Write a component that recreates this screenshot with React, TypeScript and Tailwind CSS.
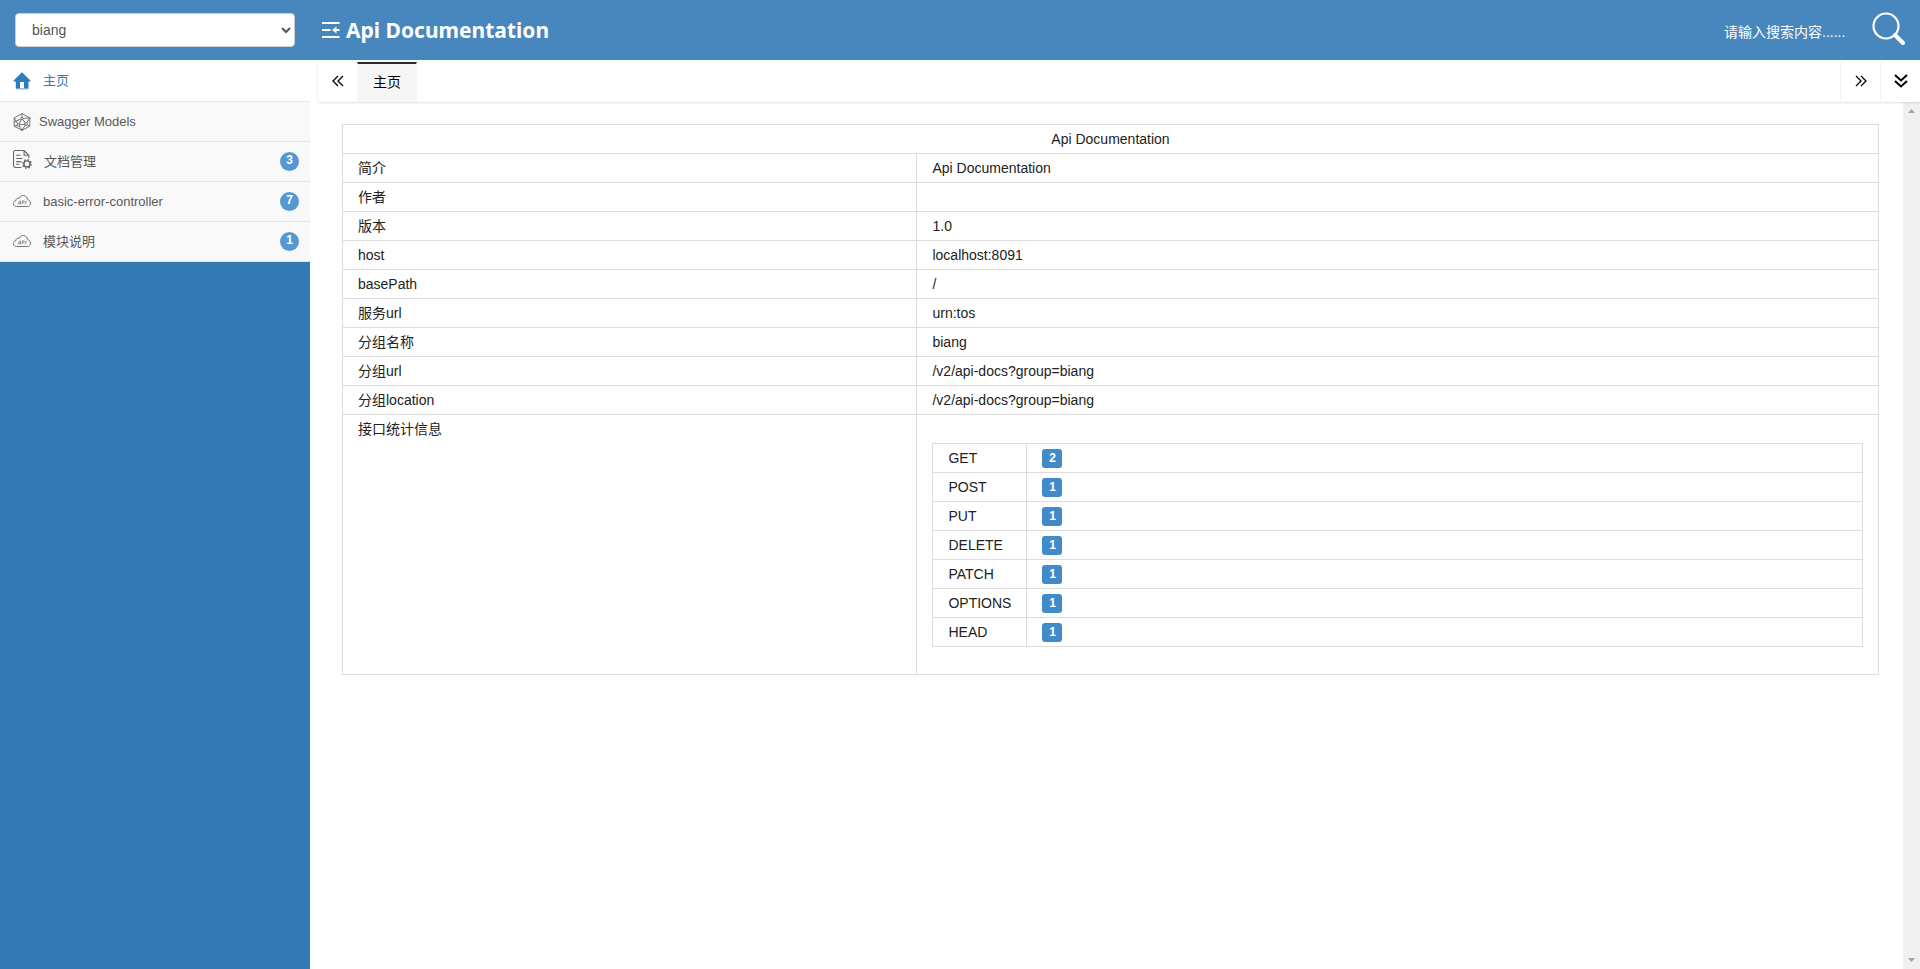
import React from "react";

const info: [string, string][] = [
  ["简介", "Api Documentation"],
  ["作者", ""],
  ["版本", "1.0"],
  ["host", "localhost:8091"],
  ["basePath", "/"],
  ["服务url", "urn:tos"],
  ["分组名称", "biang"],
  ["分组url", "/v2/api-docs?group=biang"],
  ["分组location", "/v2/api-docs?group=biang"],
];

const methods: [string, number][] = [
  ["GET", 2],
  ["POST", 1],
  ["PUT", 1],
  ["DELETE", 1],
  ["PATCH", 1],
  ["OPTIONS", 1],
  ["HEAD", 1],
];

function HomeIcon() {
  return (
    <svg className="size-[18px] shrink-0" viewBox="0 0 18 18" fill="#2b7dbc" aria-hidden="true">
      <path d="M9 .3 17.400 8.500v1H15.500V16.800H2.800V9.500H.6v-1z" />
      <path d="M7 10h4v6.300H7z" fill="#fff" />
      <path d="M4 17h10" stroke="#9db9d6" />
    </svg>
  );
}

function ModelIcon() {
  return (
    <svg className="size-[18px] shrink-0" viewBox="0 0 18 18" fill="none" stroke="#666" strokeWidth=".9" aria-hidden="true">
      <path d="M9 .6 16.800 4.800v8.400L9 17.400 1.200 13.200V4.800z" />
      <path d="M9 .6v4.900L1.200 9M9 5.500l7.800-.7M9 5.500l4 5.500 3.800 2.200M9 5.500 5.500 12l-4.300 1.200M5.500 12l7.500-1M5.500 12 9 17.400l4-6.400M1.200 4.800 5.500 12M16.800 4.800 13 11" />
      <circle cx="9" cy="5.500" r="1.200" fill="#f9f9f9" />
      <circle cx="5.500" cy="12" r="1.400" fill="#f9f9f9" />
      <circle cx="13" cy="11" r="1.400" fill="#f9f9f9" />
    </svg>
  );
}

function DocIcon() {
  return (
    <svg className="mb-1 size-[19px] shrink-0" viewBox="0 0 18 18" fill="none" stroke="#666" aria-hidden="true">
      <path d="M8 16.500H2Q.5 16.500.5 15V2Q.5.500 2 .500H10.500l4.500 4.500v2.500M10.500 .500V5H15M3 5h4M3 8h6M3 11h5M3 13.500h3" />
      <circle cx="13.200" cy="13.200" r="2.900" strokeWidth="1.400" />
      <circle cx="13.200" cy="13.200" r="4" strokeWidth="1.300" strokeDasharray="1.570 1.570" />
    </svg>
  );
}

function CloudIcon() {
  return (
    <svg className="mb-[2px] size-[18px] shrink-0" viewBox="0 0 18 18" fill="none" stroke="#777" aria-hidden="true">
      <path d="M3.500 14.500C1.700 14.500.500 13.300.500 11.500.500 9.900 1.600 8.800 3 8.500 2.900 6.500 4.800 5.400 6.300 6.200 7.200 4.400 8.600 3.500 10.200 3.500 12.700 3.500 14.400 5.300 14.500 7.600 16.300 8 17.500 9.300 17.500 11.100 17.500 13.100 16.200 14.500 14.300 14.500z" />
      <path d="M4.800 12.200 7.100 8.800l.5 3.400M5.700 11.200h1.800M8.900 12.200l.9-3.400h1.300q1.100.9-.2 1.900H9.400M12.500 12.200l.9-3.400" strokeWidth=".8" />
    </svg>
  );
}

function FoldIcon() {
  return (
    <svg className="h-[18px] w-[18px] shrink-0" viewBox="0 0 18 18" fill="none" stroke="#fff" strokeWidth="2" aria-hidden="true">
      <path d="M0 2h17.500M0 9h8.500M0 16h17.500" />
      <path d="M12 9h5.500" />
      <path d="M14.500 5.500 10 9l4.500 3.500z" fill="#fff" stroke="none" />
    </svg>
  );
}

const menu = [
  { label: "文档管理", count: 3, Icon: DocIcon },
  { label: "basic-error-controller", count: 7, Icon: CloudIcon },
  { label: "模块说明", count: 1, Icon: CloudIcon },
];

export default function App() {
  return (
    <div className="flex h-screen flex-col bg-white font-['Liberation_Sans','Noto_Sans_CJK_SC',sans-serif] text-sm leading-5 text-[#222]">
      <header className="flex h-[60px] shrink-0 items-center bg-[#4887bd] text-white">
        <div className="w-[310px] shrink-0 px-[15px]">
          <select
            aria-label="分组"
            className="h-[34px] w-full rounded border border-[#ccc] bg-white pl-3 text-sm text-[#555]"
          >
            <option>biang</option>
          </select>
        </div>
        <h1 className="flex items-center gap-[6px] pl-3 font-['Noto_Sans',sans-serif] text-[21px] leading-8 font-bold">
          <FoldIcon />
          Api Documentation
        </h1>
        <form className="ml-auto flex items-center gap-4 pr-[14px]">
          <input
            aria-label="搜索"
            placeholder="请输入搜索内容......"
            className="mt-1 w-[130px] bg-transparent text-sm outline-none placeholder:text-white"
          />
          <button type="button" aria-label="搜索" className="mb-1">
            <svg className="size-9" viewBox="0 0 36 36" fill="none" stroke="#fff" aria-hidden="true">
              <circle cx="16" cy="16" r="12.500" strokeWidth="2.200" />
              <path d="m25 25 8 8" strokeWidth="4" strokeLinecap="round" />
            </svg>
          </button>
        </form>
      </header>

      <div className="flex min-h-0 flex-1">
        <nav className="w-[310px] shrink-0 bg-[#337ab7] text-[13px] text-[#585858]">
          <a href="#home" className="flex h-[42px] items-center gap-3 border-b border-[#e5e5e5] bg-white pl-[13px] text-[#2b7dbc]">
            <HomeIcon />
            主页
          </a>
          <a href="#models" className="flex h-10 items-center gap-2 border-b border-[#e5e5e5] bg-[#f9f9f9] pl-[13px]">
            <ModelIcon />
            Swagger Models
          </a>
          {menu.map(({ label, count, Icon }) => (
            <a
              key={label}
              href="#group"
              className="flex h-10 items-center gap-3 border-b border-[#e5e5e5] bg-[#f9f9f9] pr-[11px] pl-[13px]"
            >
              <Icon />
              {label}
              <span className="ml-auto flex size-[19px] justify-center rounded-full bg-[#5898d2] text-xs leading-4 font-bold text-white">
                {count}
              </span>
            </a>
          ))}
        </nav>

        <main className="ml-2 flex min-w-0 flex-1 flex-col">
          <div className="z-10 mt-[2px] flex h-10 shrink-0 text-black shadow-[0_1px_2px_0_rgba(0,0,0,0.12)]">
            <button type="button" aria-label="向左" className="flex w-[39px] items-center justify-center pb-[2px]">
              <svg className="size-3" viewBox="0 0 12 12" fill="none" stroke="currentColor" strokeWidth="1.300" aria-hidden="true">
                <path d="M6 1 1 6l5 5M11 1 6 6l5 5" />
              </svg>
            </button>
            <button type="button" className="border-x border-t-2 border-x-[#f6f6f6] border-t-[#292b34] bg-[#f6f6f6] px-[15px] pb-[2px]">
              主页
            </button>
            <button type="button" aria-label="向右" className="ml-auto flex w-10 items-center justify-center border-l border-[#f2f2f2] pb-[2px]">
              <svg className="size-3" viewBox="0 0 12 12" fill="none" stroke="currentColor" strokeWidth="1.300" aria-hidden="true">
                <path d="m1 1 5 5-5 5M6 1l5 5-5 5" />
              </svg>
            </button>
            <button type="button" aria-label="更多" className="flex w-10 items-center justify-center border-l border-[#f2f2f2] pb-[2px]">
              <svg className="size-[14px]" viewBox="0 0 14 14" fill="none" stroke="currentColor" strokeWidth="2" aria-hidden="true">
                <path d="m1 1 6 5.500L13 1M1 7l6 5.500L13 7" />
              </svg>
            </button>
          </div>

          <div className="flex min-h-0 flex-1">
            <div className="min-w-0 flex-1 pt-[22px] pr-6 pl-6">
              <table className="w-full border-collapse">
                <tbody>
                  <tr>
                    <td colSpan={2} className="border border-[#ddd] px-[15px] py-1 text-center">
                      Api Documentation
                    </td>
                  </tr>
                  {info.map(([name, value]) => (
                    <tr key={name}>
                      <td className="h-[29px] w-[37.4%] border border-[#ddd] px-[15px] py-1">{name}</td>
                      <td className="border border-[#ddd] px-[15px] py-1">{value}</td>
                    </tr>
                  ))}
                  <tr>
                    <td className="border border-[#ddd] px-[15px] py-1 align-top">接口统计信息</td>
                    <td className="border border-[#ddd] px-[15px] pt-7 pb-[27px]">
                      <table className="w-full border-collapse">
                        <tbody>
                          {methods.map(([name, count]) => (
                            <tr key={name}>
                              <td className="h-[29px] w-[94px] border border-[#ddd] px-[15px] py-1">{name}</td>
                              <td className="border border-[#ddd] px-[15px]">
                                <span className="flex h-[19px] w-5 justify-center rounded-[3px] bg-[#428bca] text-xs leading-[18px] font-bold text-white">
                                  {count}
                                </span>
                              </td>
                            </tr>
                          ))}
                        </tbody>
                      </table>
                    </td>
                  </tr>
                </tbody>
              </table>
            </div>
            <div className="flex w-[17px] shrink-0 flex-col items-center justify-between bg-[#f0f0f0] py-[7px]" aria-hidden="true">
              <svg className="h-1 w-[7px]" viewBox="0 0 7 4" fill="#a3a3a3">
                <path d="M0 4 3.500 0 7 4z" />
              </svg>
              <svg className="h-1 w-[7px]" viewBox="0 0 7 4" fill="#a3a3a3">
                <path d="m0 0 3.500 4L7 0z" />
              </svg>
            </div>
          </div>
        </main>
      </div>
    </div>
  );
}
